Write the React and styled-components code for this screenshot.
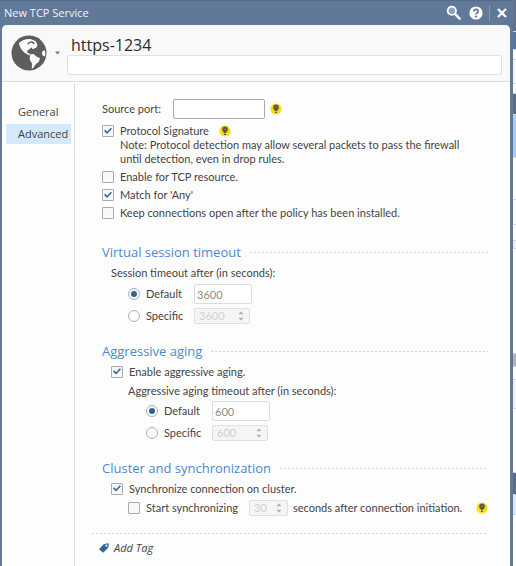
import { useState } from "react";
import styled, { createGlobalStyle } from "styled-components";

export default function App() {
  return (
    <>
      <GlobalStyle />
      <Desktop>
        <NewServiceDialog />
        <BackgroundWindow />
      </Desktop>
    </>
  );
}

function NewServiceDialog() {
  return (
    <DialogStyled role="dialog" aria-label="New TCP Service">
      <TitleBar />
      <Panel>
        <Header />
        <Body>
          <Sidebar />
          <AdvancedForm />
        </Body>
      </Panel>
    </DialogStyled>
  );
}

function TitleBar() {
  return (
    <TitleBarStyled>
      <span className="title">New TCP Service</span>
      <IconButton type="button" aria-label="Search">
        <svg width="16" height="16" viewBox="0 0 16 16">
          <circle cx="5.8" cy="5.8" r="4.2" fill="#8fa1ba" stroke="#fff" strokeWidth="1.7" />
          <path d="M9.2 9.2 13.6 13.6" stroke="#fff" strokeWidth="2.6" strokeLinecap="round" />
        </svg>
      </IconButton>
      <IconButton type="button" aria-label="Help" $left={7}>
        <svg width="14" height="14" viewBox="0 0 14 14">
          <circle cx="7" cy="7" r="6.6" fill="#fff" />
          <path d="M4.9 5.4C4.9 2.7 9.2 2.8 9.2 5.2 9.2 6.8 7.1 6.7 7.1 8.4" fill="none" stroke="#5f7899" strokeWidth="1.8" />
          <circle cx="7.1" cy="10.6" r="1.1" fill="#5f7899" />
        </svg>
      </IconButton>
      <Separator />
      <IconButton type="button" aria-label="Close">
        <svg width="12" height="12" viewBox="0 0 12 12">
          <path d="M2 2 10 10M10 2 2 10" stroke="#fff" strokeWidth="2.2" />
        </svg>
      </IconButton>
    </TitleBarStyled>
  );
}

function Header() {
  return (
    <HeaderStyled>
      <IconPicker type="button" aria-label="Choose icon">
        <GlobeIcon />
        <svg className="arrow" width="6" height="4" viewBox="0 0 6 4">
          <path d="M0 .5h5L2.5 3.5z" fill="#777" />
        </svg>
      </IconPicker>
      <div className="names">
        <h1>https-1234</h1>
        <TextInput aria-label="Comment" $height={20} $border="#e1e1e1" />
      </div>
    </HeaderStyled>
  );
}

function Sidebar() {
  const [active, setActive] = useState("Advanced");

  return (
    <SidebarStyled>
      {["General", "Advanced"].map((name) => (
        <SidebarItem key={name} type="button" $active={name === active} onClick={() => setActive(name)}>
          {name}
        </SidebarItem>
      ))}
    </SidebarStyled>
  );
}

function AdvancedForm() {
  return (
    <FormStyled>
      <General>
        <SourcePort>
          <label htmlFor="source-port">Source port:</label>
          <TextInput id="source-port" $width={92} $height={20} $border="#a9abb0" />
          <Hint $left={5} />
        </SourcePort>
        <Row $height={14}>
          <Check defaultChecked>Protocol Signature</Check>
          <Hint $left={10} />
        </Row>
        <Note>
          Note: Protocol detection may allow several packets to pass the firewall
          <br />
          until detection, even in drop rules.
        </Note>
        <Row $height={18}>
          <Check>Enable for TCP resource.</Check>
        </Row>
        <Row $height={18}>
          <Check defaultChecked>Match for 'Any'</Check>
        </Row>
        <Row $height={18}>
          <Check>Keep connections open after the policy has been installed.</Check>
        </Row>
      </General>

      <Section>
        <h2>Virtual session timeout</h2>
      </Section>
      <Row $height={21} $indent={9}>Session timeout after (in seconds):</Row>
      <TimeoutChoice name="session" value={3600} indent={26} />

      <Section>
        <h2>Aggressive aging</h2>
      </Section>
      <Row $height={21} $indent={9}>
        <Check defaultChecked>Enable aggressive aging.</Check>
      </Row>
      <Row $height={18} $indent={26}>Aggressive aging timeout after (in seconds):</Row>
      <TimeoutChoice name="aging" value={600} indent={44} />

      <Section>
        <h2>Cluster and synchronization</h2>
      </Section>
      <Row $height={21} $indent={9}>
        <Check defaultChecked>Synchronize connection on cluster.</Check>
      </Row>
      <Row $height={18} $indent={26}>
        <Check width={121}>Start synchronizing</Check>
        <Spinner label="Seconds to wait" value={30} width={39} />
        <After>seconds after connection initiation.</After>
        <Hint />
      </Row>

      <TagBar>
        <AddTag type="button">
          <svg width="12" height="12" viewBox="0 0 12 12">
            <path d="M1 7.2 5.6 2.2 10 1.2 10.9 2 10.2 5.8 5.2 10.8z" fill="#2f6699" />
            <circle cx="8.4" cy="3.6" r="1.1" fill="#fff" />
          </svg>
          Add Tag
        </AddTag>
      </TagBar>
    </FormStyled>
  );
}

function Check({ children, width, defaultChecked }) {
  return (
    <ChoiceLabel $width={width}>
      <CheckBox defaultChecked={defaultChecked} />
      {children}
    </ChoiceLabel>
  );
}

function TimeoutChoice({ name, value, indent }) {
  const [choice, setChoice] = useState("default");

  return (
    <>
      <Row $height={22} $indent={indent}>
        <ChoiceLabel $width={66}>
          <Radio name={name} checked={choice === "default"} onChange={() => setChoice("default")} />
          Default
        </ChoiceLabel>
        <TextInput aria-label={`Default ${name} timeout`} readOnly value={value} $width={58} $height={20} $border="#dcdcdc" />
      </Row>
      <Row $height={22} $indent={indent}>
        <ChoiceLabel $width={66}>
          <Radio name={name} checked={choice === "specific"} onChange={() => setChoice("specific")} />
          Specific
        </ChoiceLabel>
        <Spinner label={`Specific ${name} timeout`} value={value} width={56} disabled={choice === "default"} />
      </Row>
    </>
  );
}

function Spinner({ label, value, width, disabled = true }) {
  return (
    <SpinnerStyled $width={width}>
      <input type="text" aria-label={label} defaultValue={value} disabled={disabled} />
      <svg width="6" height="10" viewBox="0 0 6 10">
        <path d="M.5 3.2h5L3 .2zM.5 6.8h5L3 9.8z" fill="#b2b2b2" />
      </svg>
    </SpinnerStyled>
  );
}

function Hint({ $left }) {
  return (
    <HintStyled type="button" aria-label="Hint" $left={$left}>
      <svg width="12" height="12" viewBox="0 0 12 12">
        <circle cx="6" cy="6" r="5.6" fill="#fbdc12" />
        <circle cx="6" cy="4.4" r="2.8" fill="#5c5a40" />
        <path d="M4.8 6.5h2.4V8H4.8zM5 8.7h2v1.2H5z" fill="#5c5a40" />
        <path d="M5 3.6 6 5 7 3.6" fill="none" stroke="#8e8958" strokeWidth=".7" />
      </svg>
    </HintStyled>
  );
}

function GlobeIcon() {
  return (
    <svg width="36" height="36" viewBox="0 0 36 36">
      <circle cx="18" cy="18" r="17.5" fill="#5d5d5d" />
      <path
        d="M8 8C11 5 16 3.600 20 4.200L24.500 6 26.500 10 25.500 12.500 22.500 14 20 15.500 17 15.500 16 17.500 18.500 18.500 19 20.500 16.500 19.600 13.200 17.600 10.500 14.500 8.600 11z"
        fill="#fafafa"
      />
      <path d="M17 9.500C17.500 6.500 22.500 6 23 9.200" fill="none" stroke="#5d5d5d" strokeWidth="1.3" />
      <path d="M16 16 20.500 12.500 22 14.500 26 12.500 25 17 18 17.500z" fill="#5d5d5d" />
      <path d="M19.2 19.2 22.5 19 25.5 21.5 29 23.2 28 26.5 24.8 29.2 22 33.2 20.8 33.5 21 28.5 18.6 24.5z" fill="#fafafa" />
      <path d="M32.8 15.5C31 15.5 30.6 18.5 31.6 20.5L34 21.5C34.6 19.5 34.4 17.5 33.8 15.500z" fill="#fafafa" />
    </svg>
  );
}

// sliver of the main window that shows beside the dialog
const STRIPES = [
  [32, "#62708f"],
  [18, "#56769e"],
  [10, "#fafafa"],
  [24, "#f3f5f7"],
  [10, "#ffffff"],
  [21, "#5b6c84"],
  [43, "#a9cdf5"],
  [42, "#ffffff"],
  [25, "#fbfbfb"],
  [16, "#ffffff"],
  [8, "#eeeeee"],
  [105, "#ffffff"],
  [13, "#b5b5b5"],
  [13, "#ffffff"],
  [29, "#f2f2f2"],
  [64, "#ffffff"],
  [22, "#5b6c84"],
  [20, "#d6e8fb"],
];

function BackgroundWindow() {
  return (
    <BackgroundStyled aria-hidden="true">
      {STRIPES.map(([height, color], i) => (
        <Stripe key={i} $height={height} $color={color} />
      ))}
    </BackgroundStyled>
  );
}

const GlobalStyle = createGlobalStyle`
  * {
    box-sizing: border-box;
  }

  body {
    margin: 0;
    font-family: "Open Sans", "Noto Sans", sans-serif;
    font-size: 11px;
    line-height: 14px;
    color: #444444;
  }

  button, input {
    font: inherit;
    color: inherit;
    margin: 0;
  }

  button {
    padding: 0;
    border: 0;
    background: none;
  }

  svg {
    display: block;
    flex: none;
  }
`;

const Desktop = styled.div`
  display: flex;
  min-height: 100vh;
`;

const DialogStyled = styled.div`
  flex: 1;
  min-width: 0;
  display: flex;
  flex-direction: column;
  padding: 0 3px 0 2px;
  background: #607999;
  border-top: 1px solid #566a89;
`;

const TitleBarStyled = styled.header`
  display: flex;
  align-items: center;
  height: 24px;
  padding-right: 2px;

  .title{
    flex: 1;
    padding-left: 2px;
    color: #f0f3f7;
  }
`;

const IconButton = styled.button`
  margin-left: ${({ $left }) => $left || 0}px;
`;

const Separator = styled.div`
  width: 1px;
  height: 16px;
  margin: 0 6px;
  background: #8798b1;
`;

const Panel = styled.main`
  flex: 1;
  display: flex;
  flex-direction: column;
  background: #fdfdfd;
  border-radius: 5px 5px 0 0;
  overflow: hidden;
`;

const HeaderStyled = styled.div`
  display: flex;
  height: 57px;
  padding: 10px 8px 0 9px;
  background: #f9f9f9;
  border-bottom: 1px solid #dedede;

  .names{
    flex: 1;
    display: flex;
    flex-direction: column;
  }

  h1{
    margin: 0;
    padding-left: 4px;
    font-size: 16px;
    font-weight: 500;
    line-height: 20px;
    color: #2c2c2c;
  }
`;

const IconPicker = styled.button`
  display: flex;
  align-items: center;
  align-self: flex-start;
  width: 56px;

  .arrow{
    margin-left: 8px;
  }
`;

const TextInput = styled.input.attrs({ type: "text" })`
  flex: none;
  width: ${({ $width }) => ($width ? `${$width}px` : "100%")};
  height: ${({ $height }) => $height}px;
  padding: 0 2px;
  border: 1px solid ${({ $border }) => $border};
  border-radius: 2px;
  background: #ffffff;
  color: #8c8c8c;
`;

const Body = styled.div`
  flex: 1;
  display: flex;
`;

const SidebarStyled = styled.nav`
  flex: none;
  display: flex;
  flex-direction: column;
  gap: 2px;
  width: 73px;
  padding: 19px 3px 0 4px;
  border-right: 1px solid #dfdfdf;
  margin-top: 1px;
`;

const SidebarItem = styled.button`
  height: 20px;
  padding-left: 12px;
  text-align: left;
  background: ${({ $active }) => ($active ? "#d5e9fd" : "transparent")};
`;

const FormStyled = styled.form`
  flex: 1;
  min-width: 0;
  padding: 16px 22px 0 27px;
  font-family: Lato, "Open Sans", sans-serif;
`;

const General = styled.div`
  padding-bottom: 6px;
`;

const Row = styled.div`
  display: flex;
  align-items: center;
  height: ${({ $height }) => $height}px;
  padding-left: ${({ $indent }) => $indent || 0}px;
  white-space: nowrap;
`;

const SourcePort = styled.div`
  display: flex;
  align-items: center;
  height: 22px;
  margin-bottom: 4px;

  label{
    width: 71px;
  }
`;

const Note = styled.p`
  margin: 0;
  padding: 0 0 2px 18px;
  white-space: nowrap;
`;

const dotted = "repeating-linear-gradient(90deg, #d6d6d6 0 2px, transparent 2px 4px)";

const Section = styled.div`
  display: flex;
  align-items: center;
  gap: 9px;
  height: 20px;
  margin-top: 14px;

  h2{
    margin: 0;
    font-family: "Open Sans", sans-serif;
    font-size: 13px;
    font-weight: 400;
    line-height: 20px;
    color: #4b8ad2;
  }

  &::after{
    content: "";
    flex: 1;
    height: 1px;
    background: ${dotted};
  }
`;

const ChoiceLabel = styled.label`
  display: flex;
  align-items: center;
  gap: 6px;
  width: ${({ $width }) => ($width ? `${$width}px` : "auto")};
`;

const CheckBox = styled.input.attrs({ type: "checkbox" })`
  appearance: none;
  display: grid;
  place-items: center;
  width: 12px;
  height: 12px;
  border: 1px solid #a8abaf;
  border-radius: 1px;
  background: #f8f8f8;

  &:checked::before{
    content: "";
    width: 8px;
    height: 8px;
    background: #2f6aa5;
    clip-path: polygon(0 50%, 15% 35%, 38% 58%, 85% 8%, 100% 22%, 38% 88%);
  }
`;

const Radio = styled.input.attrs({ type: "radio" })`
  appearance: none;
  display: grid;
  place-items: center;
  width: 12px;
  height: 12px;
  border: 1px solid #b0b0b0;
  border-radius: 50%;
  background: #fcfcfc;

  &:checked::before{
    content: "";
    width: 6px;
    height: 6px;
    border-radius: 50%;
    background: #2a6496;
  }
`;

const SpinnerStyled = styled.div`
  display: flex;
  align-items: center;
  width: ${({ $width }) => $width}px;
  height: 16px;
  padding-right: 5px;
  border: 1px solid #e0e0e0;
  border-radius: 2px;
  background: #f5f5f5;

  input{
    flex: 1;
    min-width: 0;
    height: 14px;
    padding: 0 0 0 4px;
    border: 0;
    background: none;
    color: #8c8c8c;
  }

  input:disabled{
    color: #d0d0d0;
  }
`;

const After = styled.span`
  margin-left: 5px;
`;

const HintStyled = styled.button`
  margin-left: ${({ $left }) => ($left ? `${$left}px` : "auto")};
`;

const TagBar = styled.div`
  margin: 16px 0 0 -10px;
  padding: 8px 0 0 6px;
  background: ${dotted} top / 100% 1px no-repeat;
`;

const AddTag = styled.button`
  display: flex;
  align-items: center;
  gap: 4px;
  font-family: "Open Sans", sans-serif;
  font-style: italic;
`;

const BackgroundStyled = styled.div`
  flex: none;
  width: 3px;
  background: #ffffff;
`;

const Stripe = styled.div`
  height: ${({ $height }) => $height}px;
  background: ${({ $color }) => $color};
  border-bottom: 1px solid #d0d3d8;
`;
